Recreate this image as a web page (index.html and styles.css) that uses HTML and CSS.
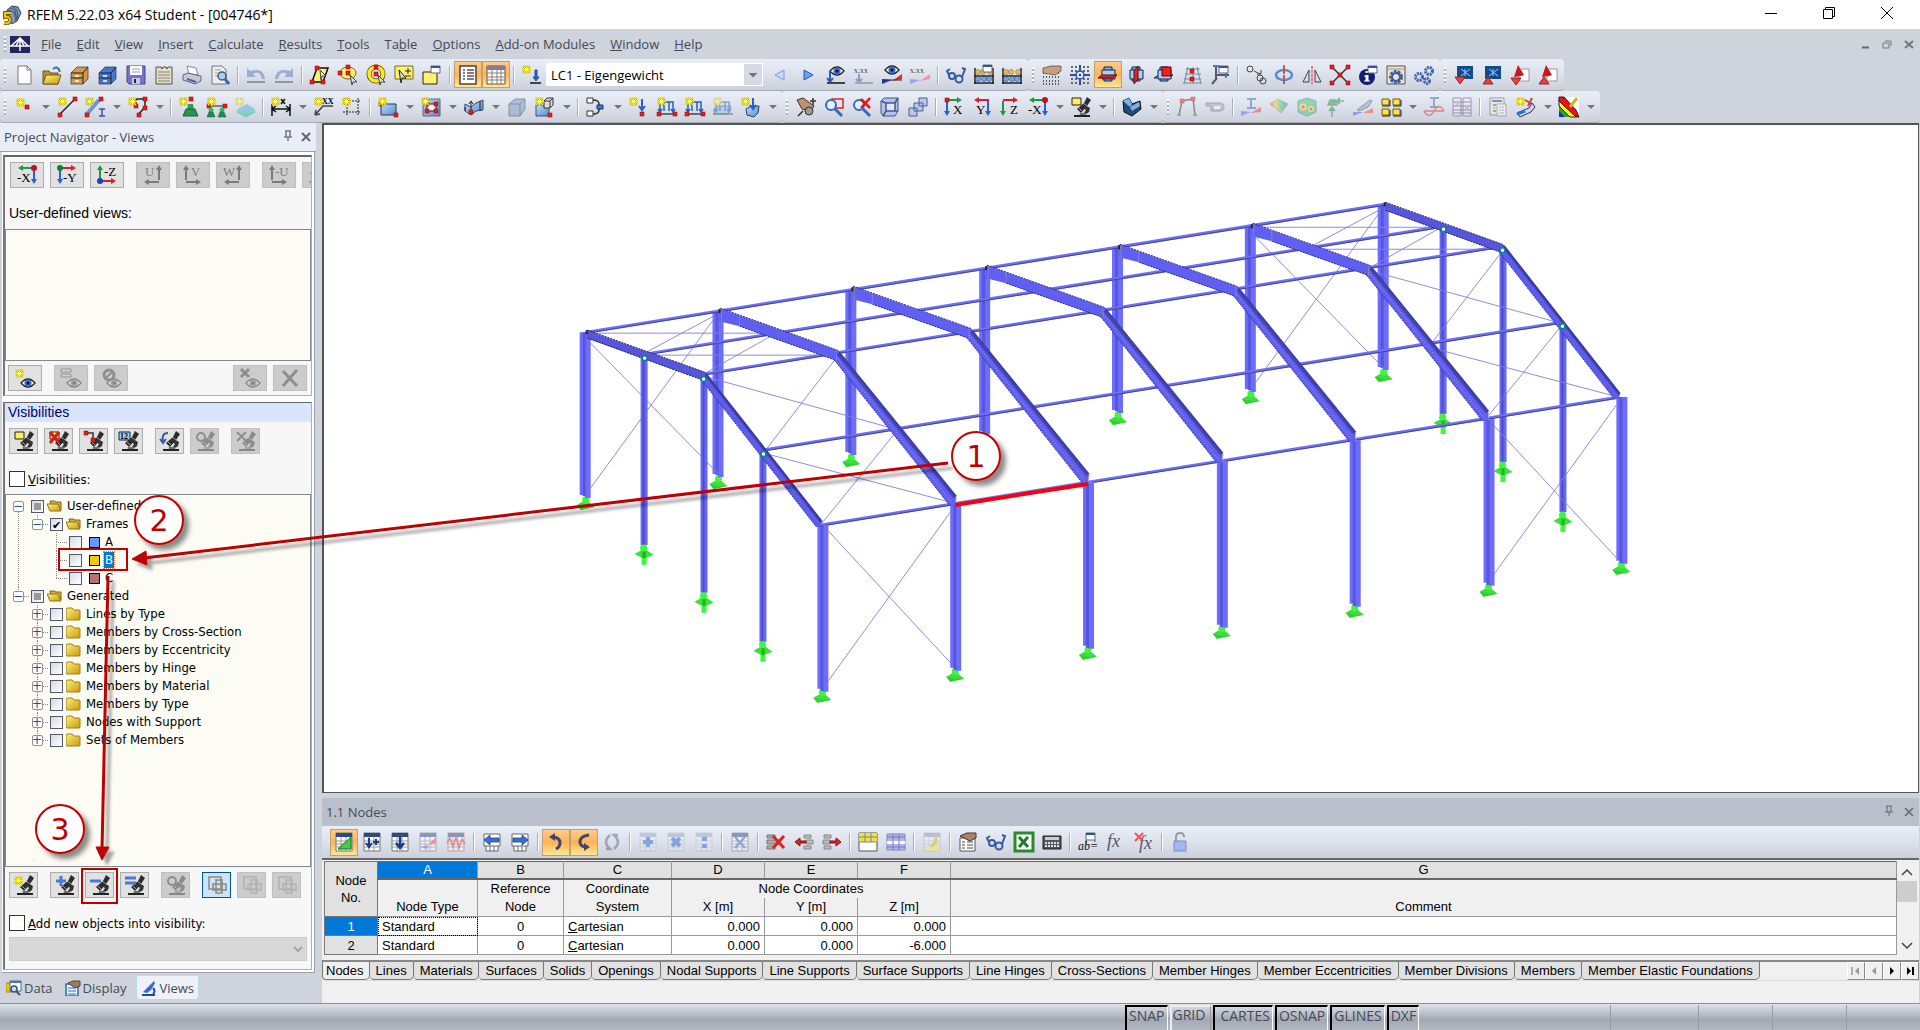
FILE: index.html
```html
<!DOCTYPE html>
<html lang="en">
<head>
  <meta charset="UTF-8" />
  <title>RFEM 5.22.03 x64 Student - [004746*]</title>
  <meta name="viewport" content="width=device-width, initial-scale=1.0" />
  <link rel="stylesheet" href="styles.css">
</head>
<body>

  <!-- Shared icon parts, drawn on a 20px grid -->
  <svg class="defs" width="0" height="0" aria-hidden="true">
    <defs>
      <linearGradient id="steel" x2="1" y2="1"><stop stop-color="#b8dcf8" /><stop offset="1" stop-color="#5a8ccc" /></linearGradient>
      <linearGradient id="gold" x2="1" y2="1"><stop stop-color="#fff07a" /><stop offset="1" stop-color="#c89a10" /></linearGradient>
      <linearGradient id="rainbow" x2="1"><stop stop-color="#e33" /><stop offset=".3" stop-color="#fc3" /><stop offset=".6" stop-color="#4c6" /><stop offset="1" stop-color="#46e" /></linearGradient>
      <g id="star">
        <path d="M4.500 0v9M0 4.500h9M1 1l7 7M8 1L1 8" stroke="#c8b400" stroke-width="2" />
        <path d="M4.500 0v9M0 4.500h9M1 1l7 7M8 1L1 8" stroke="#fff020" />
        <circle cx="4.500" cy="4.500" r="2" fill="#ff6" />
      </g>
      <g id="dot"><rect width="4" height="4" fill="#e81c1c" stroke="#900" stroke-width=".5" /></g>
      <g id="scope">
        <path d="M6 12l7-6 3-6 4 3-4 6-6 7z" fill="#2c2c2c" />
        <path d="M8 11l4 4M12 6l4 3" stroke="#aaa" />
        <path d="M14 8l5 3-1 4-4 3H9v-2h4l2-3-3-2z" fill="#333" />
        <path d="M3 18h16v2H3z" fill="#222" /><path d="M8 17h8" stroke="#aaa" />
      </g>
      <g id="eye">
        <path d="M0 5q7-8 14 0-7 8-14 0z" fill="#eef" stroke="#222" stroke-width="1.300" />
        <circle cx="7" cy="5" r="3.500" fill="#3b6fd0" /><circle cx="7" cy="5" r="1.500" fill="#012" />
      </g>
      <g id="ar-r"><path d="M0 2h10V0l5 3-5 3V4H0z" /></g>
      <g id="ar-l"><path d="M15 2H5V0L0 3l5 3V4h10z" /></g>
      <g id="ar-d"><path d="M2 0v10H0l3 5 3-5H4V0z" /></g>
      <g id="ar-u"><path d="M2 15V5H0l3-5 3 5H4v10z" /></g>
      <g id="table">
        <path d="M2 1h16v18H2z" fill="#fff" stroke="#777" /><path d="M2 1h16v4H2z" fill="#2c4a86" />
        <path d="M2 9h16M2 12h16M2 15h16M7 5v14M12 5v14" stroke="#999" />
      </g>
      <g id="abacus">
        <path d="M1 19V3M19 19V3M0 11h20M0 18h20" stroke="#222" stroke-width="1.500" />
        <g fill="#e8c040" stroke="#765" stroke-width=".5"><circle cx="4" cy="7" r="2.500" /><circle cx="9" cy="7" r="2.500" /><circle cx="16" cy="7" r="2.500" /></g>
        <g fill="#7aa6ee" stroke="#236" stroke-width=".5"><circle cx="4" cy="14" r="2.500" /><circle cx="10" cy="14" r="2.500" /><circle cx="15" cy="14" r="2.500" /></g>
      </g>
      <g id="glasses" fill="none" stroke="#3a5a9c" stroke-width="2">
        <circle cx="6" cy="11" r="3" fill="#cfe0fa" /><circle cx="13" cy="14" r="3.500" fill="#cfe0fa" /><path d="M3 10L1 6l3-2M16 12l3-8-3-1" />
      </g>
      <g id="window"><path d="M0 0h9v7H0z" fill="#fff" stroke="#667" /><path d="M0 0h9v2H0z" fill="#3450a0" /></g>
      <g id="planes">
        <path d="M6 2h8v14H6z" fill="#74b4ea" stroke="#124" /><path d="M4 5h13v9H4z" fill="#a6d2f6" stroke="#124" />
      </g>
      <g id="folder"><path d="M0 3q0-2 2-2h4l2 2h5q1 0 1 1v8q0 1-1 1H1q-1 0-1-1z" fill="url(#gold)" stroke="#a07c10" /></g>
      <g id="folder-open"><path d="M3 2h4l2 1h5v8H5z" fill="#d8b030" stroke="#7c6410" /><path d="M0 5h11l3 7H3z" fill="url(#gold)" stroke="#8c7010" /></g>
      <g id="loads" fill="none" stroke="#2a5fc0" stroke-width="1.500"><path d="M3 15V5h13v10M7 5v9M12 5v9M1 12l2 3 2-3M14 12l2 3 2-3" /><path d="M0 17h20" stroke="#444" /></g>
      <g id="squares" fill="none" stroke="#8a8a80" stroke-width="1.500"><path d="M2 2h12v12H2z" /><path d="M9 5h6v13H9zM6 9h13v6H6z" /></g>
      <g id="cabinet"><path d="M1 8l6-6h11v12l-5 5H1z" stroke="#333" stroke-width=".7" /><path d="M1 8h12v11M13 8l5-6M1 13h12" fill="none" stroke="#222" /><path d="M5 11h4M5 16h4" stroke="#fff" stroke-width="1.500" /></g>
      <g id="green-sup"><circle cx="4" cy="2" r="2.500" fill="#3b6" /><path d="M0 9l2-5h4l2 5z" fill="#285" stroke="#163" stroke-width=".5" /></g>
    </defs>
  </svg>

  <header class="title-bar">
    <svg class="icon" width="20" height="20"><path d="M5 5l5-4 6 1 3 6-4 8-5 3-4-8z" fill="#7b9cc4" stroke="#345" /><path d="M6 5l6 2 2 9M11 2l4 3 1 9M8 3l5 2 2 10" fill="none" stroke="#345" stroke-width=".8" /><path d="M9 8H3v4q5-1 5 3t-6 3" fill="none" stroke="#7a5c00" stroke-width="4" /><path d="M9 8H3v4q5-1 5 3t-6 3" fill="none" stroke="#f0c420" stroke-width="2" /></svg>
    <h1>RFEM 5.22.03 x64 Student - [004746*]</h1>
    <div class="window-buttons">
      <button aria-label="Minimize"><svg width="14" height="14"><path d="M1 7.500h12" stroke="#000" /></svg></button>
      <button aria-label="Restore"><svg width="14" height="14"><path d="M1.500 3.500h9v9h-9zM3.500 3.500v-2h9v9h-2" fill="none" stroke="#000" /></svg></button>
      <button aria-label="Close"><svg width="14" height="14"><path d="M1 1l12 12M13 1L1 13" stroke="#000" /></svg></button>
    </div>
  </header>

  <nav class="menu-bar">
    <span class="grip"></span>
    <svg class="icon" width="20" height="17"><path d="M0 0h20v17H0z" fill="#232560" /><path d="M0 10h20M10 2v13M1 10l9-8 8 8M6 10l4-8 4 8" stroke="#fff" fill="none" stroke-width="1.500" /></svg>
    <a href="#"><u>F</u>ile</a>
    <a href="#"><u>E</u>dit</a>
    <a href="#"><u>V</u>iew</a>
    <a href="#"><u>I</u>nsert</a>
    <a href="#"><u>C</u>alculate</a>
    <a href="#"><u>R</u>esults</a>
    <a href="#"><u>T</u>ools</a>
    <a href="#">Ta<u>b</u>le</a>
    <a href="#"><u>O</u>ptions</a>
    <a href="#"><u>A</u>dd-on Modules</a>
    <a href="#"><u>W</u>indow</a>
    <a href="#"><u>H</u>elp</a>
    <div class="child-buttons">
      <button aria-label="Minimize document"><svg width="9" height="9"><path d="M1 7.500h7" stroke="#666" stroke-width="2" /></svg></button>
      <button aria-label="Restore document"><svg width="10" height="9"><path d="M1 3h6v5H1zM3 1h6v5" fill="none" stroke="#777" /></svg></button>
      <button aria-label="Close document"><svg width="10" height="9"><path d="M1 1l8 7M9 1L1 8" stroke="#777" stroke-width="2" /></svg></button>
    </div>
  </nav>

  <!-- Standard toolbar -->
  <div class="toolbar-row">
    <div class="toolbar">
      <span class="grip"></span>
      <button class="tool" aria-label="New"><svg><path d="M4 1h9l4 4v14H4z" fill="#fff" stroke="#777" /><path d="M13 1v4h4" fill="none" stroke="#777" /></svg></button>
      <button class="tool" aria-label="Open"><svg><path d="M1 6h6l2 2h7v11H1z" fill="#b89420" stroke="#654" /><path d="M4 10h15l-3 9H1z" fill="url(#gold)" stroke="#765a10" /><path d="M11 4q5-4 7 3" fill="none" stroke="#456ea8" stroke-width="2" /></svg></button>
      <button class="tool" aria-label="Project manager"><svg><use href="#cabinet" fill="#d49a4c" /></svg></button>
      <button class="tool" aria-label="Model manager"><svg><use href="#cabinet" fill="#4676d0" /></svg></button>
      <button class="tool" aria-label="Save"><svg><path d="M1 1h18v18H3l-2-2z" fill="#7474cc" stroke="#448" /><path d="M4 1h12v9H4z" fill="#fff" /><path d="M6 4h8M6 7h8" stroke="#99a" /><path d="M6 13h8v6H6z" fill="#c8c8d8" /><path d="M8 14h2v4H8z" fill="#224" /></svg></button>
      <button class="tool" aria-label="Report"><svg><path d="M2 2h5l1 2 1-2h3l1 2 1-2h4v17H2z" fill="#e4dcc8" stroke="#554" /><path d="M4 7h12M4 10h12M4 13h12M4 16h12" stroke="#887" /></svg></button>
      <button class="tool" aria-label="Print"><svg><path d="M5 1l9 2 2 7-9-1z" fill="#fff" stroke="#888" /><path d="M1 10l5-2 13 3v5l-6 3-12-4z" fill="#c6c6d4" stroke="#667" /><path d="M5 14l9 3" stroke="#4664b0" stroke-width="2" /></svg></button>
      <button class="tool" aria-label="Print preview"><svg><path d="M2 1h10l4 4v14H2z" fill="#eee" stroke="#777" /><path d="M5 5h6M5 8h6M5 11h4" stroke="#99a" /><circle cx="12" cy="11" r="4" fill="#a9d0f4" stroke="#457" stroke-width="1.500" /><path d="M15 14l4 5" stroke="#3a66b4" stroke-width="3" /></svg></button>
      <span class="sep"></span>
      <button class="tool dim" aria-label="Undo"><svg><path d="M1 3v9h9L7 9q7-4 9 5h3Q18 2 4 6z" fill="#5a7cb4" /><path d="M1 17h18" stroke="#555" stroke-width="2" /></svg></button>
      <button class="tool dim" aria-label="Redo"><svg><path d="M19 3v9h-9l3-3Q6 5 4 14H1Q2 2 16 6z" fill="#5a7cb4" /><path d="M1 17h18" stroke="#555" stroke-width="2" /></svg></button>
      <span class="sep"></span>
      <button class="tool" aria-label="Select by rhomboid"><svg><path d="M7 3h11l-5 14H2z" fill="#fff16e" stroke="#111" stroke-width="1.500" /><use href="#dot" x="5" y="1" /><use href="#dot" x="0" y="15" /><use href="#dot" x="11" y="15" /><path d="M10 5l6 6h-4l-1 4z" fill="#eee" stroke="#444" /></svg></button>
      <button class="tool" aria-label="Select by ellipse"><svg><ellipse cx="10" cy="8" rx="8" ry="6" fill="#fff16e" stroke="#776c20" /><use href="#dot" x="8" y="0" /><use href="#dot" x="0" y="6" /><use href="#dot" x="8" y="6" /><path d="M12 10l7 7h-4l-1 3z" fill="#ddd" stroke="#444" /></svg></button>
      <button class="tool" aria-label="Select by ring"><svg><circle cx="10" cy="9" r="7" fill="none" stroke="#554c00" stroke-width="5" /><circle cx="10" cy="9" r="7" fill="none" stroke="#ffe920" stroke-width="3.500" /><use href="#dot" x="8" y="7" /><use href="#dot" x="8" y="0" /><path d="M12 10l7 7h-4l-1 3z" fill="#ddd" stroke="#444" /></svg></button>
      <button class="tool" aria-label="Select add"><svg><path d="M1 1h18v13H1z" fill="#fff16e" stroke="#776c20" /><path d="M14 3v6M11 6h6M11 11h6" stroke="#222" /><path d="M5 5l7 8H8l-1 5z" fill="#ddd" stroke="#222" /></svg></button>
      <button class="tool" aria-label="Special selection"><svg><path d="M1 7h14v12H1z" fill="#fff16e" stroke="#222" /><use href="#window" x="9" y="1" /></svg></button>
      <span class="sep"></span>
      <button class="tool active" aria-label="Navigator"><svg><path d="M2 1h16v18H2z" fill="#fff" stroke="#444" stroke-width="1.500" /><path d="M5 5h2M5 8h2M5 11h2M5 14h2M9 5h7M9 8h7M9 11h7M9 14h7" stroke="#555" stroke-width="1.500" /></svg></button>
      <button class="tool active" aria-label="Tables"><svg><path d="M1 1h18v18H1z" fill="#fff" stroke="#555" /><path d="M1 1h18v4H1z" fill="#8a7a94" /><path d="M1 8h18M1 12h18M1 15h18M6 5v14M11 5v14M15 5v14" stroke="#887c7c" /></svg></button>
      <span class="sep"></span>
      <button class="tool" aria-label="New load case"><svg><use href="#star" /><path d="M13 5h2v7h2l-3 4-3-4h2z" fill="#2a5fc0" stroke="#2450a0" /><path d="M8 18h11" stroke="#444" stroke-width="2" /></svg></button>
      <select class="load-case" aria-label="Load case"><option>LC1 - Eigengewicht</option></select>
      <button class="tool" aria-label="Previous load case"><svg><path d="M14 5v10l-9-5z" fill="#c8d8fa" stroke="#7a9ae0" /></svg></button>
      <button class="tool" aria-label="Next load case"><svg><path d="M6 5v10l9-5z" fill="#6aa2ee" stroke="#2458b8" /></svg></button>
      <button class="tool" aria-label="Show loads"><svg><use href="#eye" x="4" y="1" /><path d="M4 6v10M1 13l3 4 3-4" stroke="#2a5fc0" stroke-width="2" fill="none" /><path d="M1 18h18" stroke="#444" stroke-width="2" /></svg></button>
      <button class="tool dim" aria-label="Show load values"><svg><text x="0" y="8" class="tiny">x.xx</text><path d="M5 9v7M2 14l3 3 3-3" stroke="#2a5fc0" fill="none" stroke-width="2" /><path d="M1 18h18" stroke="#777" stroke-width="2" /></svg></button>
      <button class="tool" aria-label="Show results"><svg><use href="#eye" x="3" y="0" /><path d="M0 19v-5l10 1z" fill="#23c" /><path d="M20 9v5l-10 2z" fill="#e22" /><path d="M0 15h20" stroke="#333" /></svg></button>
      <button class="tool dim" aria-label="Show result values"><svg><text x="0" y="8" class="tiny">x.xx</text><path d="M0 19v-5l10 1z" fill="#66f" /><path d="M20 9v5l-10 2z" fill="#f55" /></svg></button>
      <span class="sep"></span>
      <button class="tool" aria-label="Check"><svg><use href="#glasses" /></svg></button>
      <button class="tool" aria-label="Calculate selected"><svg><use href="#abacus" /><use href="#window" x="9" y="0" /></svg></button>
      <button class="tool" aria-label="Calculate all"><svg><use href="#abacus" /></svg></button>
    </div>
    <div class="toolbar">
      <span class="grip"></span>
      <button class="tool" aria-label="Grid settings"><svg><path d="M1 8h18M1 12h18M1 16h18M1 19h18" stroke="#555" stroke-dasharray="1 2" stroke-width="2" /><path d="M1 3l8-2h10v5l-6 4-12-2z" fill="#c8a080" stroke="#543" stroke-width=".7" /></svg></button>
      <button class="tool" aria-label="Snap"><svg><path d="M1 2h18M1 6h18M1 14h18M1 18h18" stroke="#666" stroke-dasharray="2 2" stroke-width="2" /><circle cx="10" cy="10" r="4" fill="#dde4f4" stroke="#2a4fb0" stroke-width="1.500" /><path d="M10 0v6M10 14v6M0 10h6M14 10h6" stroke="#2a4fb0" stroke-width="2" /><circle cx="10" cy="10" r="1" /></svg></button>
      <button class="tool active" aria-label="Work plane XY"><svg><use href="#planes" /><path d="M0 13l4-3h15l-4 3z" fill="#e02828" stroke="#600" /></svg></button>
      <button class="tool" aria-label="Work plane YZ"><svg><use href="#planes" /><path d="M8 6l4-5v13l-4 5z" fill="#e02828" stroke="#600" /></svg></button>
      <button class="tool" aria-label="Work plane XZ"><svg><path d="M0 13l5-3h14l-4 3z" fill="#a6d2f6" stroke="#124" /><use href="#planes" /><path d="M8 2h9v9H8z" fill="#f02020" stroke="#600" /></svg></button>
      <button class="tool" aria-label="Guidelines"><svg><path d="M4 4h14M3 9h16M2 14h17M1 18h18M6 2L2 19M11 2v17M15 2l4 17" stroke="#789" fill="none" /><use href="#dot" x="8" y="4" /><use href="#dot" x="8" y="12" /></svg></button>
      <button class="tool" aria-label="Line grid"><svg><path d="M6 1v14M6 10h13M2 19l5-6" stroke="#557" stroke-width="2" /><path d="M3 1h6M16 7v6" stroke="#47b" stroke-width="2" /><use href="#window" x="9" y="1" /></svg></button>
      <span class="sep"></span>
      <button class="tool" aria-label="Move"><svg fill="none" stroke="#444"><circle cx="4" cy="4" r="3" /><circle cx="14" cy="13" r="3" /><circle cx="17" cy="16" r="3" /><path d="M8 6l6 3M11 9h4V5" /></svg></button>
      <button class="tool" aria-label="Rotate"><svg fill="none"><ellipse cx="10" cy="10" rx="8" ry="5" stroke="#5a8cd0" stroke-width="2.500" /><path d="M10 0v20" stroke="#e02020" stroke-width="1.500" stroke-dasharray="4 1" /></svg></button>
      <button class="tool" aria-label="Mirror"><svg fill="none" stroke="#444"><path d="M1 17L7 5v12zM19 17L13 5v12z" /><path d="M10 1v18" stroke="#e02020" stroke-dasharray="3 1" /></svg></button>
      <button class="tool" aria-label="Connect"><svg><path d="M2 2l16 16M18 2L2 18" stroke="#333" stroke-width="1.500" /><use href="#dot" /><use href="#dot" x="16" /><use href="#dot" y="16" /><use href="#dot" x="16" y="16" /><use href="#dot" x="8" y="8" /></svg></button>
      <button class="tool" aria-label="Info"><svg><circle cx="9" cy="12" r="8" fill="#151c78" /><path d="M9 6v2M9 10v6" stroke="#fff" stroke-width="3" /><path d="M6 16h6M6 11h3" stroke="#fff" /><use href="#window" x="10" y="1" /></svg></button>
      <button class="tool" aria-label="Program options"><svg><path d="M1 1h18v18H1z" fill="#f0e4cc" stroke="#555" /><path d="M1 4h18" stroke="#998" /><circle cx="10" cy="12" r="5" fill="none" stroke="#3c5ca4" stroke-width="4" stroke-dasharray="2.500 1" /><circle cx="10" cy="12" r="4" fill="none" stroke="#3c5ca4" stroke-width="2" /></svg></button>
      <button class="tool" aria-label="Customize"><svg fill="none" stroke="#3a62b4" stroke-width="3" stroke-dasharray="2 .8"><circle cx="5" cy="12" r="3.500" /><circle cx="15" cy="6" r="3.500" /><circle cx="13" cy="16" r="2.500" /></svg></button>
    </div>
    <div class="toolbar">
      <span class="grip"></span>
      <button class="tool" aria-label="Import model"><svg><path d="M3 1h16v13H3z" fill="#124c90" /><path d="M7 4l9 7M16 4l-9 7M11 4v7" stroke="#acf" /><path d="M1 12h10l-5 7z" fill="#e84040" stroke="#922" /></svg></button>
      <button class="tool" aria-label="Export model"><svg><path d="M3 1h16v13H3z" fill="#124c90" /><path d="M7 4l9 7M16 4l-9 7M11 4v7" stroke="#acf" /><path d="M1 19h10l-5-7z" fill="#e84040" stroke="#922" /></svg></button>
      <button class="tool" aria-label="Import CAD"><svg><path d="M9 4h10v12H9z" fill="#fff" stroke="#999" /><path d="M4 12L8 0l6 10-3 1z" fill="#c81818" /><path d="M1 13h10l-5 7z" fill="#e84040" stroke="#922" /></svg></button>
      <button class="tool" aria-label="Export CAD"><svg><path d="M9 4h10v12H9z" fill="#fff" stroke="#999" /><path d="M4 12L8 0l6 10-3 1z" fill="#c81818" /><path d="M1 19h10l-5-7z" fill="#e84040" stroke="#922" /></svg></button>
    </div>
  </div>

  <!-- Modelling, view and results toolbars -->
  <div class="toolbar-row">
    <div class="toolbar">
      <span class="grip"></span>
      <button class="tool" aria-label="New node"><svg><use href="#star" x="2" y="1" /><use href="#dot" x="11" y="8" /></svg></button><button class="drop" aria-label="Node options"></button>
      <button class="tool" aria-label="New line"><svg><path d="M3 17L18 2" stroke="#222" stroke-width="1.500" /><use href="#dot" x="16" /><use href="#dot" x="1" y="16" /><use href="#star" x="1" /></svg></button>
      <button class="tool" aria-label="New member"><svg><path d="M2 17L14 3" stroke="#6a9ad4" stroke-width="4" /><use href="#dot" x="14" y="0" /><use href="#dot" x="0" y="16" /><use href="#star" /><path d="M14 12h6M17 12v7M14 19h6" stroke="#35a" stroke-width="1.500" /></svg></button><button class="drop" aria-label="Member options"></button>
      <button class="tool" aria-label="New polyline"><svg><path d="M8 9V2h9v8l-7 8" fill="none" stroke="#222" stroke-width="1.500" /><use href="#dot" x="6" y="7" /><use href="#dot" x="15" /><use href="#dot" x="15" y="9" /><use href="#dot" x="9" y="16" /><use href="#star" /></svg></button><button class="drop" aria-label="Polyline options"></button>
      <span class="sep"></span>
      <button class="tool" aria-label="New nodal support"><svg><use href="#star" /><use href="#dot" x="10" /><path d="M8 13l1-6h5l1 6z" fill="#2fa050" /><path d="M4 19l3-7h9l3 7z" fill="#2f9050" stroke="#163" /></svg></button>
      <button class="tool" aria-label="New line support"><svg><path d="M2 9h16" stroke="#222" /><use href="#dot" y="7" /><use href="#dot" x="16" y="7" /><use href="#star" /><use href="#green-sup" y="11" /><use href="#green-sup" x="11" y="11" /></svg></button>
      <button class="tool dim" aria-label="New surface support"><svg><path d="M2 12l10-5 8 5-9 6z" fill="#5ab0d8" /><path d="M2 14l9 5 9-5" stroke="#2c8" stroke-width="3" fill="none" /><use href="#star" /></svg></button>
      <span class="sep"></span>
      <button class="tool" aria-label="Dimension"><svg><path d="M1 7v12M19 7v12M1 12h18M5 9l-4 3 4 3M15 9l4 3-4 3" fill="none" stroke="#111" stroke-width="1.500" /><path d="M10 2l4 5M14 2l-4 5" stroke="#111" stroke-width="1.500" /><use href="#star" /></svg></button><button class="drop" aria-label="Dimension options"></button>
      <button class="tool" aria-label="Comment"><svg><path d="M1 18L9 9h10M1 18l1-5M1 18l5-1" fill="none" stroke="#444" stroke-width="1.500" /><text x="8" y="7" class="tiny">XX</text><use href="#star" /></svg></button>
      <button class="tool" aria-label="Guideline"><svg><path d="M1 15h18M1 4h18M5 1v18M16 1v18" fill="none" stroke="#222" stroke-dasharray="2 1" /><use href="#star" /></svg></button>
      <span class="sep"></span>
      <button class="tool" aria-label="New surface"><svg><path d="M3 7h15v11H3z" fill="url(#steel)" stroke="#235" /><use href="#dot" x="1" y="5" /><use href="#dot" x="16" y="16" /><use href="#star" /></svg></button><button class="drop" aria-label="Surface options"></button>
      <button class="tool" aria-label="New opening"><svg><path d="M2 2h17v17H2z" fill="url(#steel)" stroke="#568" /><path d="M6 7h9v7H6z" fill="#eef" stroke="#222" /><use href="#dot" x="4" y="5" /><use href="#dot" x="13" y="5" /><use href="#dot" x="4" y="12" /><use href="#dot" x="13" y="12" /><use href="#star" /></svg></button><button class="drop" aria-label="Opening options"></button>
      <button class="tool" aria-label="Curved surface"><svg><path d="M1 7l6 3 5-4 7-3v10l-7 1-5 4-6-4z" fill="url(#steel)" stroke="#346" /><path d="M7 4v12M16 4v10M1 10v4M5 7l2-3 2 3" stroke="#222" fill="none" /><use href="#dot" x="5" y="13" /></svg></button><button class="drop" aria-label="Curved surface options"></button>
      <button class="tool dim" aria-label="New solid"><svg><path d="M2 7l6-5h10v10l-5 7H2z" fill="#7a9cc8" stroke="#345" /><path d="M2 7h11v12M13 7l5-5" fill="none" stroke="#345" /></svg></button>
      <button class="tool" aria-label="Copy solid"><svg><path d="M1 8h13v11H1z" fill="url(#steel)" stroke="#357" /><path d="M9 4h6v7H9zM9 4l3-3h6v7l-3 3M15 4l3-3" fill="#ddd" stroke="#333" /><use href="#star" /><use href="#dot" x="13" y="16" /></svg></button><button class="drop" aria-label="Solid options"></button>
      <span class="sep"></span>
      <button class="tool" aria-label="Intersection"><svg><path d="M1 1h6v5H1zM1 14h6v5H1z" fill="#fff" stroke="#333" /><path d="M7 3q6 0 6 4v6q0 4-6 4" fill="none" stroke="#333" stroke-width="1.500" /><path d="M11 8h6v4h-6z" fill="#3c7cd8" stroke="#235" /></svg></button><button class="drop" aria-label="Intersection options"></button>
      <button class="tool" aria-label="Nodal load"><svg><use href="#star" /><path d="M13 2v9M10 9l3 4 3-4" fill="none" stroke="#2a5fc0" stroke-width="2" /><use href="#dot" x="11" y="15" /></svg></button>
      <button class="tool" aria-label="Member load"><svg><use href="#loads" /><use href="#dot" y="15" /><use href="#dot" x="16" y="15" /><use href="#star" /></svg></button>
      <button class="tool" aria-label="Line load"><svg><use href="#loads" /><use href="#dot" y="15" /><use href="#dot" x="16" y="15" /><use href="#star" /></svg></button>
      <button class="tool dim" aria-label="Surface load"><svg><path d="M1 12l4-3h13l-3 8H1z" fill="#8ac4e8" stroke="#357" /><use href="#loads" /><use href="#star" /></svg></button>
      <button class="tool" aria-label="Solid load"><svg><path d="M5 12l5-3h8l-1 7-4 4-7-2z" fill="url(#steel)" stroke="#246" /><path d="M12 1v9M9 8l3 4 3-4" fill="none" stroke="#2a5fc0" stroke-width="2" /><use href="#star" /></svg></button><button class="drop" aria-label="Load options"></button>
    </div>
    <div class="toolbar">
      <span class="grip"></span>
      <button class="tool" aria-label="Pan and zoom"><svg><path d="M1 3l6-2 11 8-3 5-9-2z" fill="#c09070" stroke="#432" /><circle cx="13" cy="14" r="4" fill="#999" stroke="#333" /><path d="M2 19l5-5M17 1v7M14 4h6" stroke="#333" stroke-width="1.500" /></svg></button>
      <button class="tool" aria-label="Zoom window"><svg><path d="M8 2h11v9H8z" fill="none" stroke="#d22" stroke-width="1.500" /><circle cx="7" cy="8" r="5" fill="#e4efff" stroke="#346ac0" stroke-width="2" /><path d="M11 12l7 7" stroke="#346ac0" stroke-width="3" /></svg></button>
      <button class="tool" aria-label="Zoom all"><svg><circle cx="7" cy="8" r="5" fill="#e4efff" stroke="#346ac0" stroke-width="2" /><path d="M11 12l7 7" stroke="#346ac0" stroke-width="3" /><path d="M9 2l9 9M18 1L9 11" stroke="#e01818" stroke-width="2.500" /></svg></button>
      <button class="tool" aria-label="Isometric view"><svg><path d="M1 4l3-3h14v13l-3 5H3l-2-3z" fill="#b4c4e8" stroke="#44568c" /><path d="M6 6h9v8H6zM1 4l5 2M18 1l-3 5M15 14l3 0M6 14l-3 5" fill="#e0e6f6" stroke="#44568c" stroke-width="1.500" /></svg></button>
      <button class="tool" aria-label="Perspective"><svg fill="#b8c8ea" stroke="#4c5c90"><path d="M11 1h8v8h-8zM6 6h9v8H6zM1 11h8v8H1z" /></svg></button>
      <span class="sep"></span>
      <button class="tool" aria-label="View X"><svg><use href="#ar-r" x="3" fill="#1c9c40" /><use href="#ar-d" x="0" y="4" fill="#2a5fd8" /><use href="#dot" x="1" y="1" /><text x="9" y="17" class="axis">X</text></svg></button>
      <button class="tool" aria-label="View Y"><svg><use href="#ar-l" x="2" fill="#d8202c" /><use href="#ar-d" x="13" y="4" fill="#2a5fd8" /><text x="4" y="17" class="axis">Y</text></svg></button>
      <button class="tool" aria-label="View Z"><svg><use href="#ar-r" x="3" fill="#d8202c" /><use href="#ar-d" x="0" y="4" fill="#1c9c40" /><text x="10" y="17" class="axis">Z</text></svg></button>
      <button class="tool" aria-label="View -X"><svg><use href="#ar-l" x="1" fill="#1c9c40" /><use href="#ar-d" x="14" y="4" fill="#2a5fd8" /><circle cx="17" cy="3" r="3" fill="#c01020" /><text x="0" y="17" class="axis">-X</text></svg></button><button class="drop" aria-label="View options"></button>
      <button class="tool" aria-label="Visibility"><svg><use href="#scope" /><path d="M1 1h9v7H1z" fill="#ffee5a" stroke="#222" /></svg></button><button class="drop" aria-label="Visibility options"></button>
      <span class="sep"></span>
      <button class="tool" aria-label="Rendering"><svg><path d="M1 4l6-3 3 6 8-3 1 8-9 7-8-4z" fill="#234a78" stroke="#012" /><path d="M1 4l6-3 3 6-2 3zM8 10l9-5 1 4-8 5z" fill="#7ab4e4" /></svg></button><button class="drop" aria-label="Rendering options"></button>
    </div>
    <div class="toolbar">
      <span class="grip"></span>
      <button class="tool dim" aria-label="Deformation"><svg><path d="M2 18L5 4l11-2 2 16" fill="none" stroke="#333" stroke-width="1.500" /><use href="#dot" x="3" y="2" /><use href="#dot" x="14" /><path d="M0 17h4v2H0zM16 17h4v2h-4z" fill="#2a2" /></svg></button>
      <button class="tool dim" aria-label="Result panel"><svg><path d="M1 6h13q5 0 5 4t-5 4H6V9H1z" fill="#aaa" stroke="#666" /><path d="M9 9h6v3H9z" fill="#fff" /></svg></button>
      <span class="sep"></span>
      <button class="tool dim" aria-label="Member results"><svg><path d="M6 2h9M10 2v9M6 11h9" stroke="#456ca8" stroke-width="2" /><path d="M0 19v-5l10 1z" fill="#66f" /><path d="M20 10v5l-10 1z" fill="#f33" /></svg></button>
      <button class="tool dim" aria-label="Surface results"><svg><path d="M1 7l8-5 10 5-7 9z" fill="url(#rainbow)" stroke="#666" stroke-width=".5" /></svg></button>
      <button class="tool dim" aria-label="Solid results"><svg><path d="M1 4l9-3 9 3v11l-9 4-9-4z" fill="#49c46a" stroke="#38a" /><circle cx="6" cy="10" r="3.500" fill="#fd4" /><circle cx="6" cy="10" r="1.800" fill="#e33" /><circle cx="14" cy="12" r="3" fill="#fd4" /><circle cx="14" cy="12" r="1.500" fill="#e33" /></svg></button>
      <button class="tool dim" aria-label="Support reactions"><svg><path d="M3 8l2-5h5l2 5zM7 20v-8M4 14l3-4 3 4M19 4h-7M15 1l-4 3 4 3" fill="#3a8a54" stroke="#2a8a44" stroke-width="1.500" /></svg></button>
      <button class="tool dim" aria-label="Sections"><svg><path d="M4 13L17 3l2 1-4 6-9 4z" fill="#8ab" stroke="#456" /><path d="M0 19v-4h10z" fill="#55f" /><path d="M20 11v5H10z" fill="#f44" /></svg></button>
      <button class="tool" aria-label="Arrange panels"><svg fill="#fce254" stroke="#6c5a08"><path d="M1 2h7v6H1zM12 2h7v6h-7zM1 12h7v6H1zM12 12h7v6h-7z" /><path d="M1 9h8V3M12 9h8V3M1 19h8v-6M12 19h8v-6" fill="none" stroke="#222" /></svg></button><button class="drop" aria-label="Arrange options"></button>
      <button class="tool dim" aria-label="Result diagrams"><svg><path d="M6 1h9M10 1v9M6 10h9" stroke="#456ca8" stroke-width="2" /><path d="M0 14h20M0 14q5 9 10 0t10 0" stroke="#d33" fill="none" stroke-width="1.500" /></svg></button>
      <button class="tool dim" aria-label="Result tables"><svg><path d="M1 1h8v18H1zM11 1h8v18h-8z" fill="#eef" stroke="#556" /><path d="M1 5h18M1 9h18M1 13h18M1 16h18" stroke="#447" /><path d="M3 7h4M13 11h4" stroke="#e33" /></svg></button>
      <span class="sep"></span>
      <button class="tool dim" aria-label="Control panel"><svg><path d="M2 1h14v17H2z" fill="#eee" stroke="#555" /><path d="M4 4h10" stroke="#338" stroke-width="2" /><path d="M5 8h3" stroke="#e33" stroke-width="2" /><path d="M5 11h3" stroke="#dc2" stroke-width="2" /><path d="M5 14h3" stroke="#2a2" stroke-width="2" /><path d="M9 7h9v12H9z" fill="#fff" stroke="#777" /><path d="M11 10h5M11 13h5M11 16h5" stroke="#88a" /></svg></button>
      <button class="tool" aria-label="Clipping"><svg><path d="M9 3l7 4M16 1l-4 8" stroke="#c44" stroke-width="2" /><path d="M1 16l12-5 3-5 3 4-4 5-11 5z" fill="#cdd6e8" stroke="#334" /><path d="M1 17l8-3" stroke="#27c" stroke-width="3" /><use href="#star" /></svg></button><button class="drop" aria-label="Clipping options"></button>
      <button class="tool" aria-label="Color scale"><svg><path d="M0 0h20v20H0z" fill="#fff" /><path d="M0 13v7h7z" fill="#22d" /><path d="M0 8v6l6 6h7z" fill="#2a2" /><path d="M0 3v6l11 11h6z" fill="#fe2" stroke="#222" /><path d="M0 0h5l12 13 3 7h-3L0 4z" fill="#e11" stroke="#222" /><path d="M18 1l-7 9" stroke="#da3" stroke-width="3" /></svg></button><button class="drop" aria-label="Color options"></button>
    </div>
  </div>

  <main class="workspace">

    <aside class="navigator">
      <div class="nav-header">
        <h2>Project Navigator - Views</h2>
        <button aria-label="Pin"><svg width="10" height="12"><path d="M2 1h6M3 1v6M7 1v6M1 7h8M5 7v4" stroke="#777" fill="none" stroke-width="1.500" /></svg></button>
        <button aria-label="Close navigator"><svg width="11" height="10"><path d="M1 1l8 8M9 1L1 9" stroke="#666" stroke-width="2" /></svg></button>
      </div>

      <div class="nav-body">
        <div class="nav-views">
          <div class="button-row view-buttons">
            <button class="push" aria-label="View -X"><svg><use href="#ar-l" x="1" fill="#1c9c40" /><use href="#ar-d" x="14" y="4" fill="#2a5fd8" /><circle cx="17" cy="3" r="3" fill="#c01020" /><text x="0" y="17" class="axis">-X</text></svg></button>
            <button class="push" aria-label="View -Y"><svg><use href="#ar-r" x="4" fill="#d8202c" /><use href="#ar-d" x="0" y="4" fill="#2a5fd8" /><circle cx="3" cy="3" r="3" fill="#108030" /><text x="6" y="17" class="axis">-Y</text></svg></button>
            <button class="push" aria-label="View -Z"><svg><use href="#ar-u" x="0" fill="#1c9c40" /><use href="#ar-r" x="4" y="13" fill="#d8202c" /><circle cx="3" cy="16" r="3" fill="#2040b0" /><text x="7" y="11" class="axis">-Z</text></svg></button>
            <button class="push group" disabled aria-label="View U"><svg><use href="#ar-u" x="13" /><use href="#ar-l" x="1" y="14" /><text x="2" y="11" class="axis">U</text></svg></button>
            <button class="push" disabled aria-label="View V"><svg><use href="#ar-u" x="0" /><use href="#ar-r" x="3" y="14" /><text x="8" y="11" class="axis">V</text></svg></button>
            <button class="push" disabled aria-label="View W"><svg><use href="#ar-u" x="13" /><use href="#ar-l" x="1" y="14" /><text x="0" y="11" class="axis">W</text></svg></button>
            <button class="push group" disabled aria-label="View -U"><svg><use href="#ar-u" x="0" /><use href="#ar-r" x="3" y="14" /><text x="6" y="11" class="axis">-U</text></svg></button>
            <button class="push" disabled aria-label="View -V"><svg><use href="#ar-l" x="0" y="14" /><path d="M0 8h5" stroke="#333" /></svg></button>
          </div>
          <p class="views-label">User-defined views:</p>
          <div class="views-list"></div>
          <div class="button-row eye-buttons">
            <button class="push" aria-label="New view"><svg><use href="#star" y="1" /><use href="#eye" x="6" y="10" /></svg></button>
            <button class="push group" disabled aria-label="Update view"><svg><path d="M0 1h10v3H0zM0 6h10v3H0z" fill="#ddd" stroke="#444" /><use href="#eye" x="6" y="10" /></svg></button>
            <button class="push" disabled aria-label="Rename view"><svg><circle cx="8" cy="7" r="5" fill="none" stroke="#333" stroke-width="3" /><path d="M4 11l8-8" stroke="#333" stroke-width="2" /><use href="#eye" x="6" y="10" /></svg></button>
            <button class="push right" disabled aria-label="Delete view"><svg><path d="M1 1l8 8M9 1L1 9" stroke="#333" stroke-width="3" /><use href="#eye" x="6" y="10" /></svg></button>
            <button class="push" disabled aria-label="Delete all views"><svg><path d="M3 3l14 15M17 2L3 18" stroke="#333" stroke-width="3" /></svg></button>
          </div>
        </div>

        <div class="nav-visibilities">
          <h3>Visibilities</h3>
          <div class="button-row scope-buttons">
            <button class="push small" aria-label="Visibility by window"><svg><use href="#scope" /><path d="M1 1h9v7H1z" fill="#ffee5a" stroke="#222" /></svg></button>
            <button class="push small" aria-label="Hide objects"><svg><use href="#scope" /><path d="M1 1h9v7H1z" fill="#ffee5a" stroke="#222" /><path d="M1 1l9 11M10 1L1 12" stroke="#e01818" stroke-width="3" /></svg></button>
            <button class="push small" aria-label="Visibility by line"><svg><use href="#scope" /><path d="M2 2h7v6" fill="none" stroke="#333" stroke-width="1.500" /><use href="#dot" x="0" y="0" /><use href="#dot" x="7" y="7" /></svg></button>
            <button class="push small" aria-label="Visibility by number"><svg><use href="#scope" /><path d="M0 1h11v8H0z" fill="#9ccff4" stroke="#123" /><text x="1" y="8" class="tiny">12</text></svg></button>
            <button class="push small group" aria-label="Previous visibility"><svg><use href="#scope" /><path d="M8 2q-7 0-5 9M0 8l3 4 3-4" fill="none" stroke="#3a5aa8" stroke-width="2" /></svg></button>
            <button class="push small" disabled aria-label="Invert visibility"><svg><use href="#scope" /><circle cx="6" cy="6" r="4" fill="none" stroke="#333" stroke-width="2" /></svg></button>
            <button class="push small group" disabled aria-label="Cancel visibility"><svg><use href="#scope" /><path d="M1 1l9 9M10 1L1 10" stroke="#333" stroke-width="2" /></svg></button>
          </div>
          <label class="check-line"><input type="checkbox"><span><u>V</u>isibilities:</span></label>

          <ul class="tree">
            <li>
              <div class="row"><button class="toggle" aria-label="Collapse">−</button><input type="checkbox" class="mixed" id="t1"><svg><use href="#folder-open" /></svg><label for="t1">User-defined</label></div>
              <ul>
                <li>
                  <div class="row"><button class="toggle" aria-label="Collapse">−</button><input type="checkbox" checked id="t2"><svg><use href="#folder-open" /></svg><label for="t2">Frames</label></div>
                  <ul>
                    <li><div class="row"><span class="stub"></span><input type="checkbox" id="t3"><span class="swatch blue"></span><label for="t3">A</label></div></li>
                    <li><div class="row"><span class="stub"></span><input type="checkbox" id="t4"><span class="swatch yellow"></span><label for="t4" class="selected">B</label></div></li>
                    <li><div class="row"><span class="stub"></span><input type="checkbox" id="t5"><span class="swatch red"></span><label for="t5">C</label></div></li>
                  </ul>
                </li>
              </ul>
            </li>
            <li>
              <div class="row"><button class="toggle" aria-label="Collapse">−</button><input type="checkbox" class="mixed" id="t6"><svg><use href="#folder-open" /></svg><label for="t6">Generated</label></div>
              <ul>
                <li><div class="row"><button class="toggle" aria-label="Expand">+</button><input type="checkbox" id="t7"><svg><use href="#folder" /></svg><label for="t7">Lines by Type</label></div></li>
                <li><div class="row"><button class="toggle" aria-label="Expand">+</button><input type="checkbox" id="t8"><svg><use href="#folder" /></svg><label for="t8">Members by Cross-Section</label></div></li>
                <li><div class="row"><button class="toggle" aria-label="Expand">+</button><input type="checkbox" id="t9"><svg><use href="#folder" /></svg><label for="t9">Members by Eccentricity</label></div></li>
                <li><div class="row"><button class="toggle" aria-label="Expand">+</button><input type="checkbox" id="t10"><svg><use href="#folder" /></svg><label for="t10">Members by Hinge</label></div></li>
                <li><div class="row"><button class="toggle" aria-label="Expand">+</button><input type="checkbox" id="t11"><svg><use href="#folder" /></svg><label for="t11">Members by Material</label></div></li>
                <li><div class="row"><button class="toggle" aria-label="Expand">+</button><input type="checkbox" id="t12"><svg><use href="#folder" /></svg><label for="t12">Members by Type</label></div></li>
                <li><div class="row"><button class="toggle" aria-label="Expand">+</button><input type="checkbox" id="t13"><svg><use href="#folder" /></svg><label for="t13">Nodes with Support</label></div></li>
                <li><div class="row"><button class="toggle" aria-label="Expand">+</button><input type="checkbox" id="t14"><svg><use href="#folder" /></svg><label for="t14">Sets of Members</label></div></li>
              </ul>
            </li>
          </ul>

          <div class="button-row group-buttons">
            <button class="push small" aria-label="New visibility"><svg><use href="#scope" /><use href="#star" y="1" /></svg></button>
            <button class="push small group" aria-label="Add to group"><svg><use href="#scope" /><path d="M6 1v10M1 6h10" stroke="#4a7ad0" stroke-width="3" /></svg></button>
            <button class="push small" aria-label="Remove from group"><svg><use href="#scope" /><path d="M0 6h11" stroke="#4a7ad0" stroke-width="3" /></svg></button>
            <button class="push small" aria-label="Assign to group"><svg><use href="#scope" /><path d="M0 3h11M0 8h11" stroke="#4a7ad0" stroke-width="3" /></svg></button>
            <button class="push small group" disabled aria-label="Clear group"><svg><use href="#scope" /><circle cx="6" cy="6" r="4" fill="none" stroke="#333" stroke-width="2" /></svg></button>
            <button class="push small group checked" aria-label="Union"><svg><use href="#squares" /></svg></button>
            <button class="push small" disabled aria-label="Intersection"><svg><use href="#squares" /></svg></button>
            <button class="push small" disabled aria-label="Difference"><svg><use href="#squares" /></svg></button>
          </div>
          <label class="check-line add-line"><input type="checkbox"><span><u>A</u>dd new objects into visibility:</span></label>
          <select class="add-target" disabled aria-label="Target visibility"><option></option></select>
        </div>
      </div>

      <div class="nav-tabs">
        <button><svg><path d="M0 3h6v9H0z" fill="#f0c420" stroke="#a80" /><path d="M4 1h11v10H4z" fill="#fff" stroke="#568" /><path d="M4 1h11v2H4z" fill="#47b" /><circle cx="8" cy="9" r="3" fill="#cde" stroke="#357" stroke-width="1.500" /><path d="M10 11l4 4" stroke="#357" stroke-width="2" /></svg>Data</button>
        <button><svg><path d="M1 4h12v12H1z" fill="#eef4ff" stroke="#36a" stroke-width="1.500" /><path d="M3 8h8M3 11h8M3 14h8" stroke="#27c" /><path d="M3 3l5-2h7v5l-5 2z" fill="#a07a60" stroke="#543" /></svg>Display</button>
        <button class="current"><svg><path d="M2 12l8-8 3-3 1 2-4 7-4 3z" fill="#3a6ad8" /><path d="M1 15h13M12 14q3-3 0-6" stroke="#2448a8" stroke-width="2" fill="none" /></svg>Views</button>
      </div>
    </aside>

    <section class="content">

      <!-- 3D model: every bay repeats the first one, shifted by 133 / -21 -->
      <div class="canvas">
        <svg class="model" viewBox="323 124 1596 667" role="img" aria-label="Steel hall model">
          <defs>
            <g id="sup">
              <path d="M-9 5l7-4 5 1 6 5-14 3z" fill="#3fdd3f" /><path d="M-9 5l4 5 14-3-8 0z" fill="#2fd02f" /><circle r="3.500" fill="#3cf83c" />
            </g>
            <g id="gable-sup">
              <path d="M-2 8h5v9h-5z" fill="#3cf83c" /><path d="M-9 6l7-4h5l7 5-10 4z" fill="#3be03b" /><path d="M-1 3h3v7h-3z" fill="#1eb41e" /><circle r="3.500" fill="#3cf83c" />
            </g>
            <g id="back-col">
              <use href="#sup" x="585" y="499" />
              <path d="M579 331h11v166h-5l-2-3h-4z" fill="#6d6dfd" /><path d="M582 331h3v164h-3z" fill="#5656dc" />
            </g>
            <g id="front-col">
              <use href="#sup" x="822" y="692" />
              <path d="M817 524h11v167h-5l-2-3h-4z" fill="#6d6dfd" /><path d="M820 524h3v166h-3z" fill="#5656dc" />
            </g>
            <g id="gable-col">
              <path d="M0 0h7v188H0z" fill="#6666f8" /><path d="M2 0h2v188H2z" fill="#4c4cd0" /><use href="#gable-sup" x="3" y="191" />
            </g>
            <g id="gable-col-tall">
              <path d="M0 0h7v214H0z" fill="#6666f8" /><path d="M2 0h2v214H2z" fill="#4c4cd0" /><use href="#gable-sup" x="3" y="217" />
            </g>
            <g id="frame">
              <path d="M586 328l118 42-2 10-96-34-20-5z" fill="#5f5ff2" />
              <path d="M587 328l117 42M606 346l96 34" fill="none" stroke="#2c2c70" stroke-dasharray="2 1" />
              <path d="M704 370l119 146-1 10h-5L701 380z" fill="#5f5ff2" />
              <path d="M705 373l117 144" stroke="#4444b4" stroke-width="4" />
              <path d="M704 370l118 146M701 380l116 146" stroke="#333380" stroke-dasharray="2 1" />
              <path d="M703 377l116 146" stroke="#a8a8b8" stroke-dasharray="1 2" />
              <path d="M588 330v11M606 335v11M703 371v9M823 516v9" stroke="#aaa" stroke-dasharray="1 1" />
              <path d="M585 329h2v4h-2z" fill="#223" />
            </g>
            <g id="end-frame">
              <path d="M586 329l118 42-2 8-116-42z" fill="#5555dd" />
              <path d="M587 329l117 42M587 337l115 42" stroke="#26265c" stroke-dasharray="2 1" />
              <path d="M704 371l118 149-2 6h-4L701 379z" fill="#5c5cee" />
              <path d="M705 373l116 148" stroke="#4040ac" stroke-width="3" />
              <path d="M704 371l117 149M701 379l115 147" stroke="#333380" stroke-dasharray="2 1" />
              <path d="M585 329h2v4h-2z" fill="#223" />
            </g>
            <g id="brace" fill="none" stroke="#8080de" stroke-width=".9">
              <path d="M590 342l128 131M590 487L714 317M592 332h182M644 352l69-37M644 354h193M703 373l71-40" />
              <path d="M703 375l192 53M763 452l72-94M763 452l190 50M821 523l73-90M826 528l127 137M828 680l123-170" />
            </g>
          </defs>

          <use href="#back-col" />
          <use href="#back-col" x="133" y="-21" />
          <use href="#back-col" x="266" y="-43" />
          <use href="#back-col" x="400" y="-64" />
          <use href="#back-col" x="533" y="-85" />
          <use href="#back-col" x="666" y="-106" />
          <use href="#back-col" x="799" y="-128" />

          <use href="#gable-col" x="1440" y="225" />
          <use href="#gable-col-tall" x="1500" y="247" />
          <use href="#gable-col" x="1560" y="323" />

          <use href="#brace" />
          <use href="#brace" x="666" y="-106" />

          <path d="M586 331l799-128M644 353l799-128M703 373l799-128M763 449l799-128M821 524l799-128" stroke="#7070f2" stroke-width="3" />
          <path d="M586 332l799-128M644 354l799-128M703 374l799-128M763 450l799-128M821 525l799-128" stroke="#3c3c98" stroke-width=".9" />

          <use href="#gable-col" x="640" y="356" />
          <use href="#gable-col-tall" x="700" y="378" />
          <use href="#gable-col" x="759" y="453" />

          <use href="#front-col" />
          <use href="#front-col" x="133" y="-21" />
          <use href="#front-col" x="266" y="-43" />
          <use href="#front-col" x="400" y="-64" />
          <use href="#front-col" x="533" y="-85" />
          <use href="#front-col" x="667" y="-106" />
          <use href="#front-col" x="800" y="-128" />

          <use href="#end-frame" x="799" y="-128" />
          <use href="#frame" x="666" y="-106" />
          <use href="#frame" x="533" y="-85" />
          <use href="#frame" x="400" y="-64" />
          <use href="#frame" x="266" y="-43" />
          <use href="#frame" x="133" y="-21" />
          <use href="#end-frame" />

          <!-- selected member -->
          <path d="M955 504l133-21" stroke="#f80010" stroke-width="4" />

          <g fill="#fff" stroke="#088" stroke-width="1.500">
            <circle cx="644" cy="357" r="2.500" /><circle cx="703" cy="378" r="2.500" /><circle cx="763" cy="453" r="2.500" />
            <circle cx="1444" cy="228" r="2.500" /><circle cx="1503" cy="249" r="2.500" /><circle cx="1563" cy="325" r="2.500" />
          </g>
        </svg>
      </div>

      <div class="tables">
        <div class="tables-header">
          <h2>1.1 Nodes</h2>
          <button aria-label="Pin tables"><svg width="10" height="12"><path d="M2 1h6M3 1v6M7 1v6M1 7h8M5 7v4" stroke="#666" fill="none" /></svg></button>
          <button aria-label="Close tables"><svg width="10" height="10"><path d="M1 1l8 8M9 1L1 9" stroke="#666" stroke-width="1.500" /></svg></button>
        </div>

        <div class="toolbar table-toolbar">
          <button class="tool active" aria-label="Graphic selection"><svg><use href="#table" /><path d="M4 17L17 5v12z" fill="#4c4" stroke="#172" /></svg></button>
          <button class="tool" aria-label="Jump"><svg><use href="#table" /><path d="M7 6v8M4 11l3 4 3-4M14 7v6M11 10h6" stroke="#1a3a8c" stroke-width="2" fill="none" /></svg></button>
          <button class="tool" aria-label="Sort"><svg><use href="#table" /><path d="M10 5v10M6 11l4 5 4-5" stroke="#1a3a8c" stroke-width="2.500" fill="none" /></svg></button>
          <button class="tool dim" aria-label="Diagram"><svg><use href="#table" /><path d="M2 15l8-2v4z" fill="#66f" /><path d="M18 5v6l-8 2z" fill="#f44" /></svg></button>
          <button class="tool dim" aria-label="Oscillation"><svg><use href="#table" /><path d="M1 11l3-5 3 9 3-10 3 11 3-9 3 5" fill="none" stroke="#e33" stroke-width="1.500" /></svg></button>
          <span class="sep"></span>
          <button class="tool" aria-label="Previous table"><svg><path d="M2 2h16v12H2zM4 14v5h12v-5M8 14v5M12 14v5" fill="#fff" stroke="#666" /><path d="M2 8l6-5v3h9v4H8v3z" fill="#3c70d8" stroke="#135" stroke-width=".7" /></svg></button>
          <button class="tool" aria-label="Next table"><svg><path d="M2 2h16v12H2zM4 14v5h12v-5M8 14v5M12 14v5" fill="#fff" stroke="#666" /><path d="M18 8l-6-5v3H3v4h9v3z" fill="#3c70d8" stroke="#135" stroke-width=".7" /></svg></button>
          <span class="sep"></span>
          <button class="tool active" aria-label="Sync right"><svg><path d="M6 5q8 0 8 6 0 4-4 6" fill="none" stroke="#446" stroke-width="3" /><path d="M9 1v8L3 5z" fill="#446" /></svg></button>
          <button class="tool active" aria-label="Sync left"><svg><path d="M15 3q-9 1-9 7 0 4 5 5" fill="none" stroke="#446" stroke-width="3" /><path d="M10 11v8l6-4z" fill="#446" /></svg></button>
          <button class="tool dim" aria-label="Refresh"><svg fill="none" stroke="#668" stroke-width="2.500"><path d="M8 3q-8 7 0 14h-4M12 17q8-7 0-14h4" /></svg></button>
          <span class="sep"></span>
          <button class="tool dim" aria-label="Insert row"><svg><use href="#table" opacity=".4" /><path d="M10 5v10M5 10h10" stroke="#36c" stroke-width="4" /></svg></button>
          <button class="tool dim" aria-label="Copy row"><svg><use href="#table" opacity=".4" /><path d="M6 6l8 8M14 6l-8 8" stroke="#36c" stroke-width="4" /></svg></button>
          <button class="tool dim" aria-label="Fill row"><svg><use href="#table" opacity=".4" /><path d="M8 5h5v4H8zM8 12h5v4H8z" fill="#36c" /></svg></button>
          <span class="sep"></span>
          <button class="tool dim" aria-label="Clear table"><svg><use href="#table" /><path d="M5 5l10 11M15 5L5 16" stroke="#36c" stroke-width="2" /></svg></button>
          <span class="sep"></span>
          <button class="tool" aria-label="Delete row"><svg><path d="M1 3h8v3H1zM1 8h12v4H1zM1 14h8v3H1z" fill="#aaa" stroke="#777" /><path d="M7 4l11 12M18 4L7 16" stroke="#d22" stroke-width="3" /></svg></button>
          <button class="tool" aria-label="Shift left"><svg><path d="M10 3h7v3h-7zM12 8h7v4h-7zM10 14h7v3h-7z" fill="#bbb" stroke="#888" /><path d="M1 10l5-4v3h6v2H6v3z" fill="#d22" stroke="#811" /></svg></button>
          <button class="tool" aria-label="Shift right"><svg><path d="M2 3h7v3H2zM1 8h7v4H1zM2 14h7v3H2z" fill="#bbb" stroke="#888" /><path d="M19 10l-5-4v3H8v2h6v3z" fill="#d22" stroke="#811" /></svg></button>
          <span class="sep"></span>
          <button class="tool" aria-label="Header color"><svg><path d="M1 1h18v18H1z" fill="#fff" stroke="#555" /><path d="M1 1h18v9H1z" fill="#eee04a" /><path d="M1 5h18M7 1v9M13 1v9M1 10h18" stroke="#887" /></svg></button>
          <button class="tool" aria-label="Row color"><svg><path d="M1 2h18v16H1z" fill="#b4b4f4" stroke="#88a" /><path d="M1 9h18v3H1z" fill="#fff" /><path d="M1 5h18M1 15h18M7 2v16M13 2v16" stroke="#77b" /></svg></button>
          <span class="sep"></span>
          <button class="tool dim" aria-label="Edit"><svg><use href="#table" opacity=".5" /><path d="M8 13h10v6H2z" fill="#ee6" /><path d="M14 3v7l-5 5" fill="none" stroke="#cb0" stroke-width="2.500" /></svg></button>
          <span class="sep"></span>
          <button class="tool" aria-label="Table settings"><svg><path d="M2 6h15v13H2z" fill="#fff" stroke="#555" /><path d="M4 10h3M4 13h3M4 16h3M9 10h6M9 13h6M9 16h6" stroke="#444" /><path d="M2 4l7-3h9v5l-6 3z" fill="#a88468" stroke="#432" /></svg></button>
          <button class="tool" aria-label="Check table"><svg><use href="#glasses" /></svg></button>
          <button class="tool" aria-label="Export to Excel"><svg><path d="M1 1h18v18H1z" fill="#fff" stroke="#2a8a2a" stroke-width="3" /><path d="M5 5l9 10M14 5L5 15" stroke="#1c7c2c" stroke-width="3" /></svg></button>
          <button class="tool" aria-label="Calculator"><svg><path d="M1 4h18v13H1z" fill="#555" stroke="#222" /><path d="M3 5h14v3H3z" fill="#ccd" /><path d="M3 11h14M3 14h14" stroke="#dde" stroke-width="2" stroke-dasharray="2 1" /></svg></button>
          <span class="sep"></span>
          <button class="tool" aria-label="Parameters"><svg><use href="#window" x="8" y="1" /><path d="M8 8v4M17 8v2" stroke="#555" /><text x="0" y="18" class="fx small-fx">ab=</text></svg></button>
          <button class="tool" aria-label="Formula"><svg><text x="1" y="15" class="fx">fx</text></svg></button>
          <button class="tool" aria-label="Delete formula"><svg><text x="5" y="17" class="fx">fx</text><path d="M1 1l8 8M9 1L1 9" stroke="#e55" stroke-width="2" /></svg></button>
          <span class="sep"></span>
          <button class="tool" aria-label="Lock"><svg><path d="M6 9V5q0-4 4-4t4 4" fill="none" stroke="#99a" stroke-width="2" /><path d="M4 9h12v10H4z" fill="#a0b8f0" stroke="#7a8cc8" /></svg></button>
        </div>

        <div class="grid-area">
          <table>
            <colgroup>
              <col class="c-no"><col class="c-a"><col class="c-b"><col class="c-c"><col class="c-num"><col class="c-num"><col class="c-num"><col>
            </colgroup>
            <thead>
              <tr class="letters">
                <th rowspan="3" class="corner">Node<br>No.</th>
                <th class="current">A</th><th>B</th><th>C</th><th>D</th><th>E</th><th>F</th><th>G</th>
              </tr>
              <tr class="upper">
                <th></th><th>Reference</th><th>Coordinate</th><th colspan="3">Node Coordinates</th><th></th>
              </tr>
              <tr class="lower">
                <th>Node Type</th><th>Node</th><th>System</th><th>X [m]</th><th>Y [m]</th><th>Z [m]</th><th>Comment</th>
              </tr>
            </thead>
            <tbody>
              <tr><th class="current">1</th><td class="focus">Standard</td><td class="mid">0</td><td><u>C</u>artesian</td><td class="num">0.000</td><td class="num">0.000</td><td class="num">0.000</td><td></td></tr>
              <tr><th>2</th><td>Standard</td><td class="mid">0</td><td><u>C</u>artesian</td><td class="num">0.000</td><td class="num">0.000</td><td class="num">-6.000</td><td></td></tr>
            </tbody>
          </table>
          <div class="scrollbar">
            <button aria-label="Scroll up"><svg width="12" height="8"><path d="M1 7l5-5 5 5" fill="none" stroke="#444" stroke-width="1.500" /></svg></button>
            <span class="thumb"></span>
            <button aria-label="Scroll down"><svg width="12" height="8"><path d="M1 1l5 5 5-5" fill="none" stroke="#444" stroke-width="1.500" /></svg></button>
          </div>
        </div>

        <div class="sheet-tabs">
          <button class="current">Nodes</button>
          <button>Lines</button>
          <button>Materials</button>
          <button>Surfaces</button>
          <button>Solids</button>
          <button>Openings</button>
          <button>Nodal Supports</button>
          <button>Line Supports</button>
          <button>Surface Supports</button>
          <button>Line Hinges</button>
          <button>Cross-Sections</button>
          <button>Member Hinges</button>
          <button>Member Eccentricities</button>
          <button>Member Divisions</button>
          <button>Members</button>
          <button>Member Elastic Foundations</button>
          <div class="sheet-nav">
            <button aria-label="First sheet" disabled><svg width="10" height="10"><path d="M1 1v8" stroke="#999" stroke-width="1.500" /><path d="M8 1v8L4 5z" fill="#999" /></svg></button>
            <button aria-label="Previous sheet" disabled><svg width="10" height="10"><path d="M7 1v8L3 5z" fill="#999" /></svg></button>
            <button aria-label="Next sheet"><svg width="10" height="10"><path d="M3 1v8l4-4z" /></svg></button>
            <button aria-label="Last sheet"><svg width="10" height="10"><path d="M2 1v8l4-4z" /><path d="M8 1v8" stroke="#000" stroke-width="2" /></svg></button>
          </div>
        </div>
      </div>
    </section>
  </main>

  <footer class="status-bar">
    <div class="modes">
      <button>SNAP</button>
      <button class="off">GRID</button>
      <button class="wide">CARTES</button>
      <button>OSNAP</button>
      <button>GLINES</button>
      <button>DXF</button>
    </div>
    <div class="panes"><span></span><span></span><span></span><span></span></div>
  </footer>

  <!-- Step markers and arrows drawn over the window -->
  <svg class="callouts" width="1920" height="1030">
    <defs>
      <filter id="shadow" x="-30%" y="-30%" width="180%" height="180%"><feDropShadow dx="5" dy="5" stdDeviation="2.500" flood-opacity=".45" /></filter>
      <filter id="line-shadow" filterUnits="userSpaceOnUse" x="0" y="400" width="1100" height="500"><feDropShadow dx="5" dy="5" stdDeviation="1.500" flood-opacity=".35" /></filter>
    </defs>
    <g fill="#c00000" stroke="#c00000" filter="url(#line-shadow)">
      <path d="M948 463L144 558M108 576l-6 274" stroke-width="3" />
      <path d="M132 559l14-8 1 14zM102 860l-6-13h13z" />
    </g>
    <g fill="none" stroke="#c00000" stroke-width="2">
      <rect x="59" y="549" width="68" height="21" />
      <rect x="82" y="869" width="35" height="34" />
    </g>
    <g fill="#fff" stroke="#c00000" stroke-width="2" filter="url(#shadow)">
      <circle cx="976" cy="456" r="24" /><circle cx="159" cy="520" r="24" /><circle cx="60" cy="829" r="24" />
    </g>
    <g class="step">
      <text x="976" y="467">1</text><text x="159" y="531">2</text><text x="60" y="840">3</text>
    </g>
  </svg>

</body>
</html>
```
FILE: styles.css
```css
* {
  box-sizing: border-box;
}

body {
  display: flex;
  flex-direction: column;
  height: 100vh;
  margin: 0;
  overflow: hidden;
  font-family: "Open Sans", "Noto Sans", sans-serif;
  font-size: 13px;
  color: #444a56;
  background-color: #cfd3dc;
}

h1, h2, h3, p, ul {
  margin: 0;
  padding: 0;
  font-weight: normal;
}

button {
  padding: 0;
  border: none;
  background: none;
  font: inherit;
  color: inherit;
}

button, label, a {
  cursor: pointer;
}

.defs, .callouts {
  position: absolute;
  top: 0;
  left: 0;
}

/* title and menu */

.title-bar {
  display: flex;
  align-items: center;
  height: 29px;
  padding: 0 4px 0 2px;
  background-color: #fff;
}

.title-bar h1 {
  flex: 1;
  margin-left: 5px;
  font-size: 14px;
  color: #000;
}

.window-buttons {
  display: flex;
}

.window-buttons button {
  width: 58px;
  height: 29px;
}

.menu-bar {
  display: flex;
  align-items: center;
  height: 30px;
}

.menu-bar a {
  margin-left: 15px;
  color: inherit;
  text-decoration: none;
}

.menu-bar .icon {
  margin-right: -4px;
}

.child-buttons {
  display: flex;
  gap: 12px;
  margin-left: auto;
  padding-right: 6px;
}

.grip {
  width: 2px;
  height: 16px;
  margin: 0 4px;
  background: repeating-linear-gradient(#fff 0 2px, #aab0bc 2px 4px);
}

/* toolbars */

.toolbar-row {
  display: flex;
  height: 32px;
}

.toolbar {
  display: flex;
  align-items: center;
  height: 32px;
  padding-right: 2px;
  border-bottom: 1px solid #a4a9b6;
  border-radius: 4px;
  background: linear-gradient(#eaeef7, #dde1eb 50%, #cdd1dc);
}

.tool {
  flex: none;
  width: 28px;
  height: 27px;
}

.tool svg, .push svg {
  display: block;
  width: 20px;
  height: 20px;
  margin: auto;
  overflow: visible;
}

.tool.active {
  border: 1px solid #c0a070;
  background: linear-gradient(#fccb8c, #fdb35c 50%, #ffe790);
}

.dim svg {
  opacity: 0.5;
}

.drop {
  width: 15px;
  height: 26px;
}

.drop::before {
  content: "";
  display: block;
  width: 0;
  margin: auto;
  border: 4px solid transparent;
  border-top-color: #777;
  border-bottom: none;
}

.sep {
  width: 2px;
  height: 18px;
  margin: 0 3px;
  border-left: 1px solid #a8adb8;
  background-color: #fff;
}

.load-case {
  width: 217px;
  height: 23px;
  margin-right: 3px;
  padding: 0 4px;
  border: 1px solid #fff;
  border-radius: 0;
  font: inherit;
  color: #000;
  appearance: none;
  background:
    linear-gradient(45deg, transparent 50%, #777 50%) right 9px center / 4px 4px no-repeat,
    linear-gradient(-45deg, transparent 50%, #777 50%) right 5px center / 4px 4px no-repeat,
    linear-gradient(to left, #d6dae4 18px, #fff 18px);
}

.tiny {
  font: bold 8px "Liberation Serif", serif;
}

.axis {
  font: 13px "Liberation Serif", serif;
}

.fx {
  font: italic 18px "Liberation Serif", serif;
  fill: #556;
}

.small-fx {
  font-size: 12px;
  fill: #111;
}

/* workspace */

.workspace {
  display: flex;
  flex: 1;
  gap: 6px;
  min-height: 0;
  padding-right: 1px;
}

.navigator {
  display: flex;
  flex-direction: column;
  width: 316px;
}

.nav-header {
  display: flex;
  align-items: center;
  gap: 8px;
  height: 29px;
  padding: 0 4px;
  border-bottom: 1px solid #9aa0ae;
  background-color: #e9edf7;
}

.nav-header h2 {
  flex: 1;
  font-size: 13px;
}

.nav-body {
  display: flex;
  flex: 1;
  flex-direction: column;
  min-height: 0;
  margin: 0 1px 0 2px;
  padding: 3px 0 2px;
  border-right: 1px solid #9aa0ae;
  border-bottom: 1px solid #9aa0ae;
  background-color: #fff;
}

.nav-views, .nav-visibilities {
  margin: 0 2px 0 1px;
  border: 1px solid #a8a8e8;
  border-left: 2px solid #777;
  background-color: #f7f7f7;
}

.nav-views {
  height: 241px;
  border-top: 2px solid #666;
}

.nav-visibilities {
  display: flex;
  flex: 1;
  flex-direction: column;
  min-height: 0;
  margin-top: 6px;
  border-top: 1px solid #666;
}

.button-row {
  display: flex;
  gap: 6px;
}

.push {
  flex: none;
  width: 34px;
  height: 26px;
  border: 1px solid #adadad;
  background-color: #e1e1e1;
}

.push:disabled {
  border-color: #bfbfbf;
  background-color: #ccc;
}

.push:disabled svg {
  filter: grayscale(1);
  opacity: 0.4;
}

.push.small {
  width: 29px;
}

.push.group {
  margin-left: 6px;
}

.push.checked {
  border-color: #005499;
  background-color: #cce4f7;
}

.push.right {
  margin-left: auto;
}

.view-buttons {
  padding: 5px 0 0 5px;
  overflow: hidden;
}

.views-label {
  margin-top: 15px;
  padding-left: 4px;
  font: 14px/20px "Liberation Sans", sans-serif;
  color: #000;
}

.views-list {
  height: 132px;
  margin-top: 6px;
  border: 1px solid #828790;
  background-color: #fcfcf4;
}

.eye-buttons {
  padding: 4px 4px 0 3px;
}

.nav-visibilities h3 {
  padding-left: 3px;
  font: 14px/19px "Liberation Sans", sans-serif;
  color: #000070;
  background-color: #d9e4ff;
}

.scope-buttons {
  padding: 6px 0 0 5px;
}

.scope-buttons, .group-buttons {
  margin-left: -1px;
}

.check-line {
  display: flex;
  align-items: center;
  gap: 3px;
  height: 16px;
  margin: 17px 0 7px 4px;
  font: 13px "DejaVu Sans Condensed", "DejaVu Sans", sans-serif;
  color: #000;
}

.check-line input {
  width: 16px;
  height: 16px;
  margin: 0;
  border: 1px solid #333;
  appearance: none;
  background-color: #fff;
}

.tree {
  flex: 1;
  min-height: 0;
  padding: 2px 0 0 7px;
  border: 1px solid #828790;
  background-color: #fcfcf4;
}

.tree, .tree ul {
  list-style: none;
}

.tree ul {
  padding-left: 19px;
}

.tree li:not(:last-child) {
  background: repeating-linear-gradient(#888 0 1px, transparent 1px 2px) 5px 9px / 1px 100% no-repeat;
}

.row {
  display: flex;
  align-items: center;
  height: 18px;
  background:
    repeating-linear-gradient(#888 0 1px, transparent 1px 2px) 5px 0 / 1px 9px no-repeat,
    repeating-linear-gradient(90deg, #888 0 1px, transparent 1px 2px) 5px 9px / 11px 1px no-repeat;
}

.tree > li:first-child > .row {
  background: none;
}

.toggle, .stub {
  flex: none;
  width: 11px;
  height: 11px;
  margin-right: 7px;
}

.toggle {
  border: 1px solid #919191;
  border-radius: 2px;
  background-color: #fff;
  font: 12px/8px "DejaVu Sans", sans-serif;
  color: #2c4c9c;
  text-indent: -1px;
}

.row input {
  display: grid;
  flex: none;
  place-items: center;
  width: 13px;
  height: 13px;
  margin: 0 3px 0 0;
  border: 1px solid #51596a;
  appearance: none;
  background: linear-gradient(135deg, #d4dae4, #fff);
}

.row input:checked::before {
  content: "✔";
  font: 11px "DejaVu Sans", sans-serif;
  color: #000;
}

.row input.mixed::before {
  content: "";
  width: 7px;
  height: 7px;
  background-color: #999;
}

.row svg {
  flex: none;
  width: 16px;
  height: 14px;
  margin-right: 3px;
}

.row label {
  padding: 0 1px;
  font: 13px/16px "DejaVu Sans Condensed", "DejaVu Sans", sans-serif;
  color: #000;
}

.row label.selected {
  outline: 1px dotted #f58220;
  background-color: #0078d7;
  color: #fff;
}

.swatch {
  width: 11px;
  height: 11px;
  margin: 0 4px;
  border: 1px solid #000;
  box-shadow: 0 0 0 3px #fff;
}

.blue { background-color: #6699ff; }
.yellow { background-color: #f8c800; }
.red { background-color: #b87070; }

.group-buttons {
  padding: 5px 0 0 5px;
}

.add-line {
  margin-bottom: 6px;
}

.add-target {
  flex: none;
  height: 24px;
  margin: 0 4px 8px;
  border: 1px solid #bfbfbf;
  border-radius: 0;
  background-color: #ccc;
}

.nav-tabs {
  display: flex;
  gap: 8px;
  height: 30px;
  padding: 2px 4px 3px;
}

.nav-tabs button {
  display: flex;
  align-items: center;
  gap: 2px;
  padding: 0 2px;
}

.nav-tabs svg {
  width: 16px;
  height: 16px;
}

.nav-tabs .current {
  padding: 0 4px;
  border: 1px solid #b4dfe6;
  border-radius: 0 0 4px 4px;
  background-color: #eef1f8;
}

.content {
  display: flex;
  flex: 1;
  flex-direction: column;
  min-width: 0;
}

.canvas {
  flex: 1;
  min-height: 0;
  border: 1px solid #555;
  border-width: 2px 1px 1px 2px;
  background-color: #fff;
}

.model {
  display: block;
  width: 100%;
  height: 100%;
}

/* tables */

.tables {
  height: 210px;
  border-top: 5px solid #cfd3dc;
  background-color: #f0f0f0;
}

.tables-header {
  display: flex;
  align-items: center;
  gap: 10px;
  height: 28px;
  padding: 0 5px 0 4px;
  background-color: #b9c0cb;
}

.tables-header h2 {
  flex: 1;
  font-size: 13px;
}

.table-toolbar {
  height: 32px;
  padding-left: 8px;
  border: none;
  border-radius: 0;
}

.grid-area {
  display: flex;
  height: 102px;
  padding: 1px 2px 0;
  border-top: 2px solid #666;
}

table {
  flex: 1;
  height: 94px;
  border-collapse: collapse;
  table-layout: fixed;
  font: 13px/15px "Liberation Sans", sans-serif;
  color: #000;
}

th, td {
  padding: 0 4px;
  border: 1px solid #999;
  font-weight: normal;
  white-space: nowrap;
}

td {
  background-color: #fff;
}

tbody tr, .upper, .lower {
  height: 19px;
}

.letters {
  height: 17px;
}

.letters th {
  border-top: 1px solid #666;
  border-bottom: 2px solid #666;
  background-color: #e1e1e1;
}

.upper th {
  border-bottom: none;
}

.lower th {
  border-top: none;
}

.letters .corner, tbody th {
  border: 1px solid #777;
  background-color: #e1e1e1;
}

.letters .corner {
  line-height: 17px;
}

.letters .current, tbody .current {
  background-color: #0078d7;
  color: #fff;
}

.focus {
  outline: 1px dotted #000;
  outline-offset: -1px;
}

.mid {
  text-align: center;
}

.num {
  text-align: right;
}

.c-no { width: 53px; }
.c-a { width: 100px; }
.c-b { width: 86px; }
.c-c { width: 108px; }
.c-num { width: 93px; }

.scrollbar {
  display: flex;
  flex-direction: column;
  width: 20px;
  height: 94px;
}

.scrollbar button {
  height: 20px;
}

.thumb {
  height: 21px;
  margin-bottom: auto;
  background-color: #cdcdcd;
}

.sheet-tabs {
  display: flex;
  height: 21px;
  border-top: 2px solid #888;
  border-bottom: 1px solid #ddd;
  font: 13px "Liberation Sans", sans-serif;
  color: #000;
}

.sheet-tabs > button {
  height: 18px;
  padding: 0 6px;
  border: 1px solid #777;
  border-top: none;
  border-left: none;
  border-radius: 0 0 5px 4px;
  background-color: #e1e1e1;
  white-space: nowrap;
}

.sheet-tabs > .current {
  padding: 0 5px 0 3px;
  border-left: 1px solid #777;
  background-color: #f0f0f0;
}

.sheet-nav {
  display: flex;
  margin-left: auto;
}

.sheet-nav button {
  width: 18px;
  border: 1px solid;
  border-color: #fff #888 #888 #fff;
}

/* status bar */

.status-bar {
  display: flex;
  justify-content: space-between;
  height: 27px;
  padding: 1px 0 0 1125px;
  border-top: 1px solid #888e9c;
  background: linear-gradient(#dfe3ea, #a3a9b4 60%, #b3b8c2);
}

.modes {
  display: flex;
  gap: 2px;
}

.modes button {
  padding: 0 2px 6px;
  border: 1px solid;
  border-width: 2px 1px 0 2px;
  border-color: #000 #fff #fff #000;
  font-size: 14px;
  line-height: 16px;
  white-space: nowrap;
}

.modes .off {
  padding: 0 5px 8px 1px;
  border-color: #eee #999 #999 #eee;
}

.modes .wide {
  padding-left: 5px;
}

.panes {
  display: flex;
}

.panes span {
  width: 74px;
  border-left: 1px solid #989ea9;
}

.panes span:first-child {
  width: 88px;
}

.callouts {
  pointer-events: none;
}

.step {
  font: 30px "DejaVu Sans", sans-serif;
  fill: #c00000;
  text-anchor: middle;
}
```
